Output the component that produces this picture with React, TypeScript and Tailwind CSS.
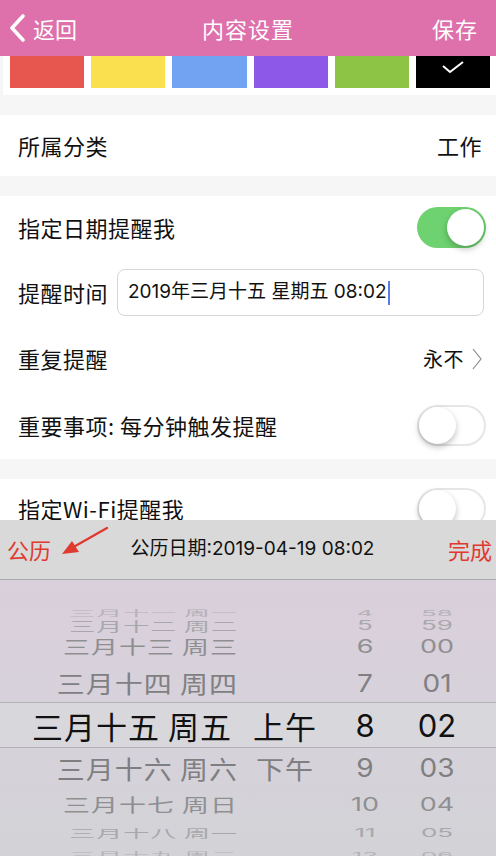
const cjk = { fontFamily: '"Noto Sans CJK SC", "Noto Sans", sans-serif' }
const mixed = { fontFamily: 'Inter, "Noto Sans CJK SC", sans-serif' }
const num = { fontFamily: 'Inter, "Noto Sans CJK SC", sans-serif' }

const swatches = ['bg-[#e8574f]', 'bg-[#fae04f]', 'bg-[#72a2f2]', 'bg-[#8d58e8]', 'bg-[#8dc445]', 'bg-black']

type Row = {
	date: string
	ampm?: string
	hour: string
	minute: string
	h: string
	size: string
	scale: number
	color: string
}

const rows: Row[] = [
	{ date: '三月十一 周一', hour: '4', minute: '58', h: 'h-[12px]', size: 'text-[26px]', scale: 0.3, color: 'text-[#b4b2b8]' },
	{ date: '三月十二 周二', hour: '5', minute: '59', h: 'h-[16px]', size: 'text-[26px]', scale: 0.5, color: 'text-[#a8a8ab]' },
	{ date: '三月十三 周三', hour: '6', minute: '00', h: 'h-[36px]', size: 'text-[27px]', scale: 0.68, color: 'text-[#8f8f92]' },
	{ date: '三月十四 周四', hour: '7', minute: '01', h: 'h-[38px]', size: 'text-[28px]', scale: 0.86, color: 'text-[#808083]' },
	{ date: '三月十五 周五', ampm: '上午', hour: '8', minute: '02', h: 'h-[46px]', size: 'text-[31px]', scale: 1, color: 'text-[#111]' },
	{ date: '三月十六 周六', ampm: '下午', hour: '9', minute: '03', h: 'h-[40px]', size: 'text-[28px]', scale: 0.9, color: 'text-[#7f7f82]' },
	{ date: '三月十七 周日', hour: '10', minute: '04', h: 'h-[32px]', size: 'text-[27px]', scale: 0.68, color: 'text-[#8f8f92]' },
	{ date: '三月十八 周一', hour: '11', minute: '05', h: 'h-[22px]', size: 'text-[26px]', scale: 0.45, color: 'text-[#a8a8ab]' },
	{ date: '三月十九 周二', hour: '12', minute: '06', h: 'h-[8px]', size: 'text-[26px]', scale: 0.3, color: 'text-[#b4b4b8]' },
]

const Toggle = ({ on }: { on: boolean }) => (
	<div
		className={
			on
				? 'w-[69px] h-[41px] rounded-full bg-[#6dd26f] flex items-center justify-end px-[2px]'
				: 'w-[69px] h-[41px] rounded-full bg-white border-2 border-[#e6e6e6] flex items-center justify-start'
		}
	>
		<div className="w-[37px] h-[37px] rounded-full bg-white shadow-[0_3px_6px_rgba(0,0,0,0.25)]" />
	</div>
)

const App = () => {
	return (
		<div
			className="relative w-[496px] h-[856px] overflow-hidden bg-[#f6f6f6] text-[#111]"
			style={cjk}
		>
			<header className="h-[56px] bg-[#de70ab] text-white grid grid-cols-[1fr_auto_1fr] items-center text-[22px]">
				<div className="flex items-center gap-[6px] pl-[9px]">
					<svg width="18" height="28" viewBox="0 0 18 28">
						<polyline
							points="14,2 3,14 14,26"
							fill="none"
							stroke="white"
							strokeWidth="3.6"
							strokeLinecap="round"
							strokeLinejoin="round"
						/>
					</svg>
					<span>返回</span>
				</div>
				<h1 className="tracking-[1px]">内容设置</h1>
				<span className="justify-self-end pr-[18px] tracking-[1px]">保存</span>
			</header>

			<section className="ml-[3px] bg-white pl-[7px] pr-[6px] pb-[7px] flex gap-[7px]">
				{swatches.map((c, i) => (
					<div key={c} className={`flex-1 h-[32px] ${c} flex justify-center`}>
						{i === swatches.length - 1 && (
							<svg width="26" height="16" viewBox="0 0 26 16" className="mt-[3px]">
								<polyline points="3,7 10,13 23,3" fill="none" stroke="white" strokeWidth="2" />
							</svg>
						)}
					</div>
				))}
			</section>

			<div className="mt-[20px] bg-white h-[61px] flex items-center justify-between pl-[18px] pr-[14px] text-[22px] tracking-[0.5px]">
				<span>所属分类</span>
				<span>工作</span>
			</div>

			<div className="mt-[20px] bg-white text-[22px] tracking-[0.5px]">
				<div className="h-[63px] flex items-center justify-between pl-[18px] pr-[10px]">
					<span>指定日期提醒我</span>
					<Toggle on />
				</div>
				<div className="h-[67px] flex items-center pl-[18px] pr-[12px] gap-[9px]">
					<span>提醒时间</span>
					<div
						className="flex-1 h-[47px] rounded-[8px] border border-[#d6d6d6] flex items-center pl-[10px] text-[19px] tracking-normal"
						style={mixed}
					>
						<span>2019年三月十五 星期五 08:02</span>
						<span className="w-[2px] h-[24px] bg-[#5b7be8] ml-[1px]" />
					</div>
				</div>
				<div className="h-[65px] flex items-center justify-between pl-[18px] pr-[14px]">
					<span>重复提醒</span>
					<span className="flex items-center gap-[8px] text-[20px]">
						永不
						<svg width="10" height="22" viewBox="0 0 10 22">
							<polyline points="1,1 9,11 1,21" fill="none" stroke="#8a8a8a" strokeWidth="1.2" />
						</svg>
					</span>
				</div>
				<div className="h-[68px] flex items-center justify-between pl-[18px] pr-[10px]">
					<span>重要事项: 每分钟触发提醒</span>
					<Toggle on={false} />
				</div>
			</div>

			<div className="mt-[20px] bg-white text-[22px] tracking-[0.5px]">
				<div className="h-[58px] flex items-center justify-between pl-[18px] pr-[10px]">
					<span>指定Wi-Fi提醒我</span>
					<Toggle on={false} />
				</div>
			</div>

			<div className="absolute left-0 right-0 bottom-0 h-[336px] flex flex-col">
				<div className="relative h-[60px] bg-[#d9d9d9] border-b border-[#a9a9a9] flex items-center justify-between pl-[7px] pr-[4px]">
					<span className="text-[22px] text-[#e03a30]">公历</span>
					<svg
						width="52"
						height="32"
						viewBox="0 0 52 32"
						className="absolute left-[58px] top-[6px]"
					>
						<line x1="49" y1="2" x2="12" y2="23" stroke="#e03a30" strokeWidth="2.4" strokeLinecap="round" />
						<polygon points="4,28 14,15 21,26" fill="#e03a30" />
					</svg>
					<span className="text-[19px] text-[#111] ml-[6px]" style={mixed}>
						公历日期:2019-04-19 08:02
					</span>
					<span className="text-[22px] text-[#e03a30]">完成</span>
				</div>
				<div className="flex-1 bg-gradient-to-b from-[#dacfdc] via-[#d6d2da] to-[#d3d3d7] pt-[20px]">
					{rows.map(r => (
						<div
							key={r.date}
							className={`${r.h} grid grid-cols-[240px_90px_70px_74px] items-center ${r.color} ${
								r.ampm === '上午' ? 'border-y border-[#b3b3b7] bg-[#d8d8dc]' : ''
							}`}
						>
							<div className={`flex justify-end items-center h-full ${r.ampm === '上午' ? 'pr-[8px]' : 'pr-[2px]'}`}>
								<span
									className={`${r.size} leading-none whitespace-nowrap tracking-[1px]`}
									style={{ transform: `scaleY(${r.scale})` }}
								>
									{r.date}
								</span>
							</div>
							<div className="flex justify-center items-center h-full">
								{r.ampm && (
									<span
										className={`${r.size} leading-none tracking-[1px]`}
										style={{ transform: `scaleY(${r.scale})` }}
									>
										{r.ampm}
									</span>
								)}
							</div>
							<div className="flex justify-center items-center h-full">
								<span
									className={`${r.size} leading-none`}
									style={{ ...num, transform: `scaleY(${r.scale})` }}
								>
									{r.hour}
								</span>
							</div>
							<div className="flex justify-center items-center h-full">
								<span
									className={`${r.size} leading-none`}
									style={{ ...num, transform: `scaleY(${r.scale})` }}
								>
									{r.minute}
								</span>
							</div>
						</div>
					))}
				</div>
			</div>
		</div>
	)
}

export default App
